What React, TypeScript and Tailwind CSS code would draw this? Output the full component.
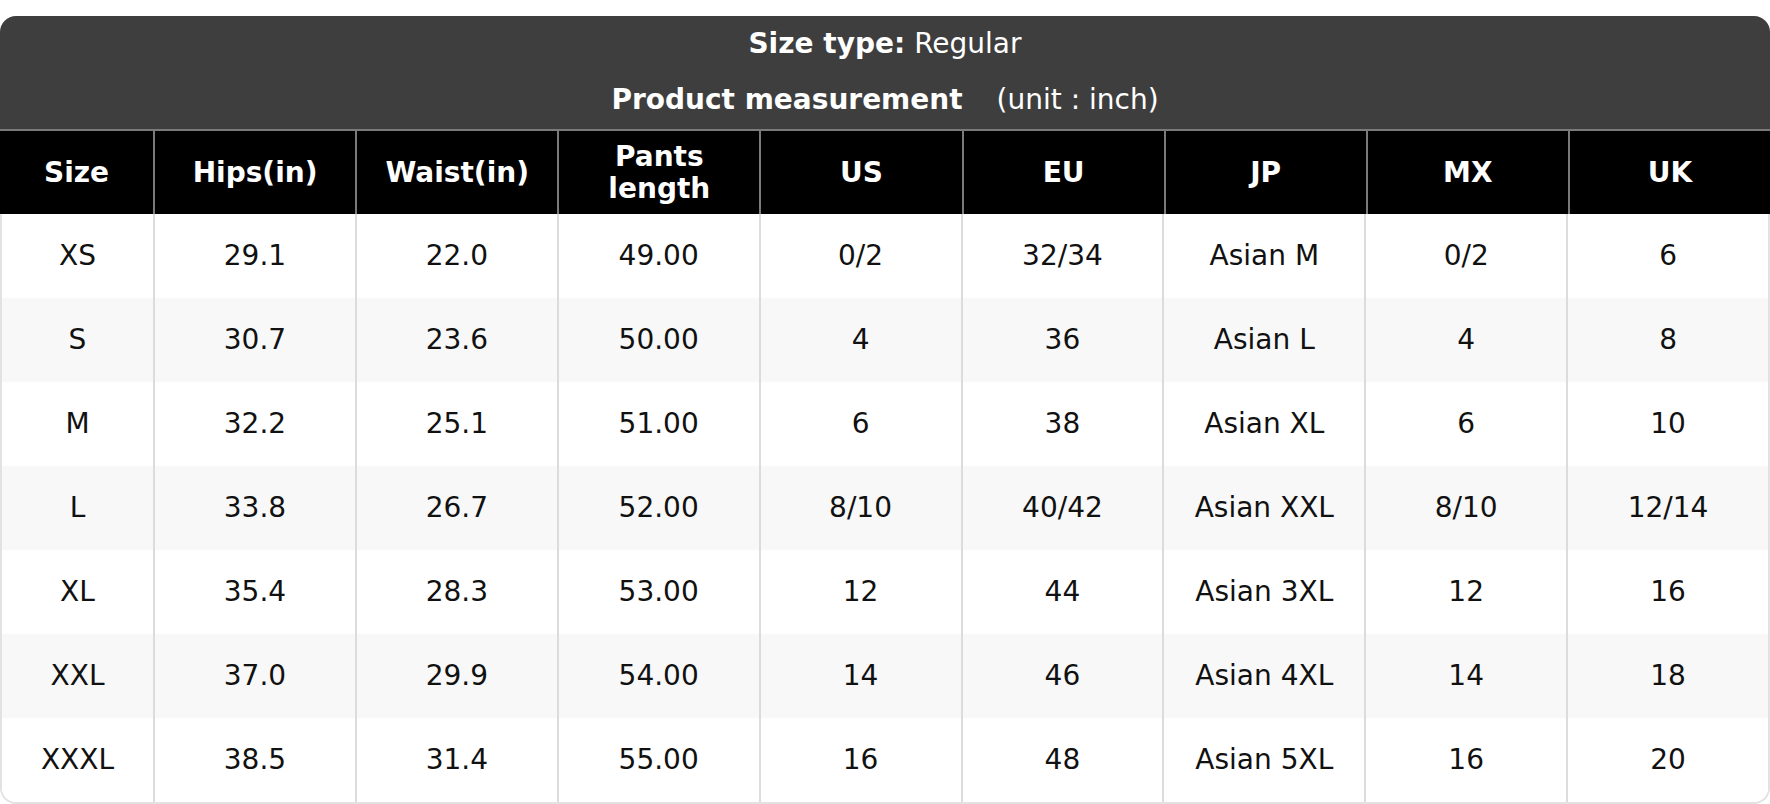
import React from "react";

const headers = ["Size", "Hips(in)", "Waist(in)", "Pants length", "US", "EU", "JP", "MX", "UK"];

const rows = [
  ["XS", "29.1", "22.0", "49.00", "0/2", "32/34", "Asian M", "0/2", "6"],
  ["S", "30.7", "23.6", "50.00", "4", "36", "Asian L", "4", "8"],
  ["M", "32.2", "25.1", "51.00", "6", "38", "Asian XL", "6", "10"],
  ["L", "33.8", "26.7", "52.00", "8/10", "40/42", "Asian XXL", "8/10", "12/14"],
  ["XL", "35.4", "28.3", "53.00", "12", "44", "Asian 3XL", "12", "16"],
  ["XXL", "37.0", "29.9", "54.00", "14", "46", "Asian 4XL", "14", "18"],
  ["XXXL", "38.5", "31.4", "55.00", "16", "48", "Asian 5XL", "16", "20"],
];

export default function App() {
  return (
    <div className="w-[1770px] h-[804px] bg-white pt-4 font-['DejaVu_Sans',sans-serif] text-[28px]">
      <div className="flex flex-col">
        {/* title block */}
        <div className="bg-[#3e3e3e] rounded-t-[16px] text-white flex flex-col pb-px">
          <div className="h-[56px] flex items-center justify-center">
            <span className="font-bold">Size type:</span>
            <span className="ml-[9px]">Regular</span>
          </div>
          <div className="h-[56px] flex items-center justify-center">
            <span className="font-bold">Product measurement</span>
            <span className="ml-[34px]">(unit : inch)</span>
          </div>
        </div>
        <div className="h-[2px] bg-[#7a7a7a]" />

        {/* column headers */}
        <div className="grid grid-cols-[153px_repeat(8,minmax(0,1fr))] bg-black h-[83px]">
          {headers.map((h, i) => (
            <div
              key={h}
              className={
                "flex items-center justify-center text-center text-white font-bold leading-[1.12] " +
                (i > 0 ? "border-l-2 border-[#7a7a7a]" : "")
              }
            >
              {h === "Pants length" ? (
                <span>
                  Pants
                  <br />
                  length
                </span>
              ) : (
                h
              )}
            </div>
          ))}
        </div>

        {/* body */}
        <div className="border-x-2 border-b-2 border-[#e2e2e2] rounded-b-[16px] overflow-hidden">
          {rows.map((r, ri) => (
            <div
              key={r[0]}
              className={
                "grid grid-cols-[151px_repeat(8,minmax(0,1fr))] h-[84px] text-[#111] " +
                (ri % 2 === 1 ? "bg-[#f8f8f8]" : "bg-white")
              }
            >
              {r.map((c, ci) => (
                <div
                  key={ci}
                  className={
                    "flex items-center justify-center " +
                    (ci > 0 ? "border-l-2 border-[#dcdcdc]" : "")
                  }
                >
                  {c}
                </div>
              ))}
            </div>
          ))}
        </div>
      </div>
    </div>
  );
}
